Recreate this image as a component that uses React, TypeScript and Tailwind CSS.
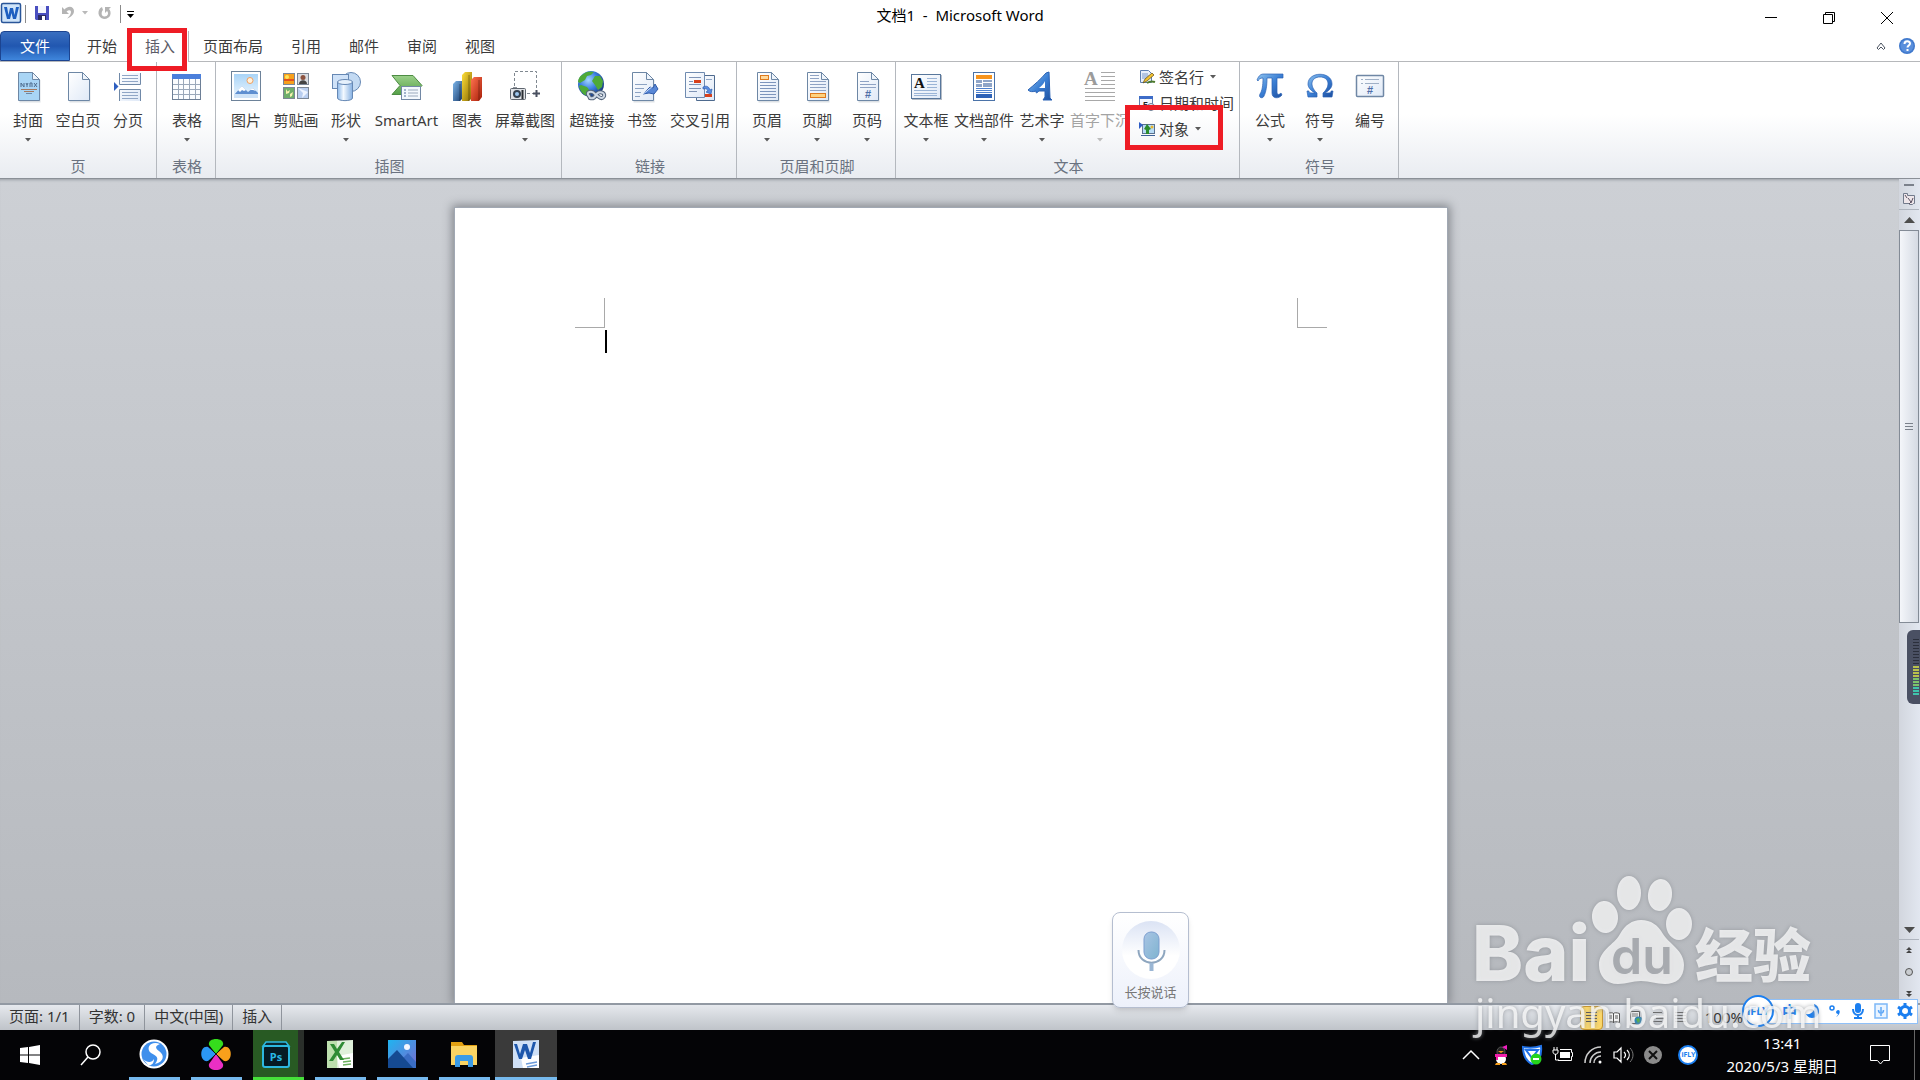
import type { ReactNode } from "react"

interface RibbonButtonProps {
    label: string
    icon: ReactNode
    width?: string
    arrow?: boolean
    disabled?: boolean
}

const tabs = ["开始", "插入", "页面布局", "引用", "邮件", "审阅", "视图"]

function Defs() {
    return (
        <svg width="0" height="0" className="absolute" aria-hidden="true">
            <defs>
                <linearGradient id="paper" x1="0" y1="0" x2="1" y2="1">
                    <stop offset="0" stopColor="#ffffff" />
                    <stop offset="1" stopColor="#dfe9f7" />
                </linearGradient>
                <linearGradient id="blue" x1="0" y1="0" x2="1" y2="1">
                    <stop offset="0" stopColor="#8fc4ef" />
                    <stop offset="0.5" stopColor="#3b7fd4" />
                    <stop offset="1" stopColor="#1d4f9f" />
                </linearGradient>
                <linearGradient id="sky" x1="0" y1="0" x2="0" y2="1">
                    <stop offset="0" stopColor="#a9d4f7" />
                    <stop offset="1" stopColor="#eef7ff" />
                </linearGradient>
                <linearGradient id="cyl" x1="0" y1="0" x2="1" y2="0">
                    <stop offset="0" stopColor="#8db9ea" />
                    <stop offset="0.4" stopColor="#f3f9ff" />
                    <stop offset="1" stopColor="#85b0e2" />
                </linearGradient>
                <linearGradient id="green" x1="0" y1="0" x2="0" y2="1">
                    <stop offset="0" stopColor="#9bd08a" />
                    <stop offset="1" stopColor="#55a048" />
                </linearGradient>
                <linearGradient id="barBlue" x1="0" y1="0" x2="1" y2="1">
                    <stop offset="0" stopColor="#7db6ea" />
                    <stop offset="1" stopColor="#1c3f70" />
                </linearGradient>
                <linearGradient id="barGold" x1="0" y1="0" x2="1" y2="1">
                    <stop offset="0" stopColor="#ffe03a" />
                    <stop offset="1" stopColor="#8a6a00" />
                </linearGradient>
                <linearGradient id="barRed" x1="0" y1="0" x2="1" y2="1">
                    <stop offset="0" stopColor="#ff7350" />
                    <stop offset="1" stopColor="#a81e08" />
                </linearGradient>
                <radialGradient id="globe" cx="0.4" cy="0.35" r="0.7">
                    <stop offset="0" stopColor="#a5d8ff" />
                    <stop offset="0.5" stopColor="#3b7ee0" />
                    <stop offset="1" stopColor="#12306f" />
                </radialGradient>
                <linearGradient id="picBg" x1="0" y1="0" x2="1" y2="1">
                    <stop offset="0" stopColor="#1fb4f0" />
                    <stop offset="1" stopColor="#7a6bd0" />
                </linearGradient>
                <linearGradient id="mic" x1="0" y1="0" x2="1" y2="1">
                    <stop offset="0" stopColor="#a9c4e4" />
                    <stop offset="1" stopColor="#7fb4d0" />
                </linearGradient>
                <linearGradient id="micDisc" x1="0" y1="0" x2="0" y2="1">
                    <stop offset="0" stopColor="#dbe3f4" />
                    <stop offset="0.6" stopColor="#ffffff" />
                </linearGradient>
            </defs>
        </svg>
    )
}

function Icon({ children, size = 32 }: { children: ReactNode; size?: number }) {
    return (
        <svg width={size} height={size} viewBox={`0 0 ${size} ${size}`} className="shrink-0 overflow-visible" aria-hidden="true">
            {children}
        </svg>
    )
}

function Sheet({ fill = "url(#paper)" }: { fill?: string }) {
    return (
        <>
            <path d="M7.5 3.5h14l7 7v22h-21z" fill="#9aa5b3" opacity="0.35" />
            <path d="M6.5 2.5h14l7 7v21h-21z" fill={fill} stroke="#6d87a5" />
            <path d="M20.5 2.5v7h7z" fill="#eef4fb" stroke="#6d87a5" strokeLinejoin="round" />
        </>
    )
}

const CoverIcon = () => (
    <Icon>
        <Sheet fill="#a9d5f5" />
        <path d="M9 17v-4l3 4v-4M14 13l1 2 1-2M15 15v2M18 17v-4h2v4M22 13l3 4M25 13l-3 4" stroke="#4d6b8c" fill="none" />
        <path d="M9 19.5h16M12 21.5h10" stroke="#a5795f" />
        <path d="M14 23.5h6" stroke="#6d87a5" />
    </Icon>
)
const BlankIcon = () => (
    <Icon>
        <Sheet />
    </Icon>
)
const BreakIcon = () => (
    <Icon>
        <path d="M7.5 3v11.5h21V3M7.5 31V19.5h21V31" fill="url(#paper)" stroke="#7089a8" />
        <path d="M10 5.5h16M10 8.5h16M10 11.5h16M10 22.5h16M10 25.5h16M10 28.5h16" stroke="#90a6c6" />
        <path d="M2 12l4.500 4.500-4.500 4.500z" fill="#2e5fc0" />
    </Icon>
)
const TableIcon = () => (
    <Icon>
        <rect x="1.500" y="4.500" width="28" height="25" fill="#fbfdff" stroke="#6d7f96" />
        <rect x="1" y="4" width="29" height="5" fill="#4b7fdb" />
        <path d="M2 14.500h27M2 19.500h27M2 24.500h27M7.500 9v20M12.500 9v20M18.500 9v20M24.500 9v20" stroke="#9aa8ba" />
    </Icon>
)
const PictureIcon = () => (
    <Icon>
        <rect x="1.500" y="1.500" width="29" height="29" fill="#fff" stroke="#6d8299" />
        <rect x="4" y="4" width="24" height="24" fill="url(#sky)" />
        <circle cx="20" cy="10.500" r="3" fill="#fff3df" stroke="#f0a060" />
        <path d="M4 25l8-9 6 6 5-4 5 5v5H4z" fill="#5f8fd0" />
        <path d="M8 20l4-4 4 4-2 1-2-1-2 2zM20 20l3-2 3 3-3-1z" fill="#fff" />
        <path d="M4 24h24v4H4z" fill="#cfe3f7" />
    </Icon>
)
const ClipIcon = () => (
    <Icon>
        <rect x="3.500" y="3.500" width="11" height="11" fill="#f7a01c" stroke="#7c8796" />
        <path d="M4 9h10v2H4z" fill="#e2521d" />
        <circle cx="7" cy="7" r="2" fill="#ffe55a" />
        <rect x="17.500" y="3.500" width="11" height="11" fill="#d9dce1" stroke="#7c8796" />
        <circle cx="23" cy="7.500" r="2.500" fill="#8c5340" />
        <path d="M19 14c0-5 8-5 8 0z" fill="#444" />
        <rect x="3.500" y="17.500" width="11" height="11" fill="#6fae6c" stroke="#7c8796" />
        <path d="M6 19l1.500 2.500L10 20l-1 3-3 1zM10 24l3-2-1 4-2 1z" fill="#f7f3b0" />
        <rect x="17.500" y="17.500" width="11" height="11" fill="#b9cef0" stroke="#7c8796" />
        <path d="M18 18l5 5-1 5 6-6z" fill="#eef4ff" />
    </Icon>
)
const ShapesIcon = () => (
    <Icon>
        <circle cx="21" cy="12" r="9.500" fill="#c3daf3" stroke="#6688b4" />
        <rect x="2.500" y="4.500" width="16" height="14" fill="#cfe2f8" stroke="#6688b4" />
        <path d="M7.500 12v16c0 3.500 15 3.500 15 0V12z" fill="url(#cyl)" stroke="#6688b4" />
        <ellipse cx="15" cy="12" rx="7.500" ry="2.500" fill="#e6f1fc" stroke="#6688b4" />
    </Icon>
)
const SmartArtIcon = () => (
    <Icon>
        <path d="M1 5.500h21l9 10-9 9H1l8-9z" fill="url(#green)" stroke="#4d8c43" />
        <rect x="10.500" y="16.500" width="19" height="13" fill="#f3f8fd" stroke="#7288a5" />
        <path d="M13 20h2M13 23h2M13 26h2" stroke="#4e6f9c" />
        <path d="M17 20h10M17 23h10M17 26h10" stroke="#9aa9bc" />
    </Icon>
)
const ChartIcon = () => (
    <Icon>
        <path d="M2 14l3-3h6v18l-2 2H2z" fill="url(#barBlue)" />
        <path d="M11 5l3-3h7v26l-3 3h-7z" fill="url(#barGold)" />
        <path d="M20 10l3-3h8v20l-3 4h-8z" fill="url(#barRed)" />
        <path d="M9 14v17M18 5v26M28 10v20" stroke="#00000055" />
    </Icon>
)
const ScreenshotIcon = () => (
    <Icon>
        <path d="M5.500 16V1.500h22v22H18" fill="none" stroke="#808890" strokeDasharray="3 2" />
        <path d="M24 23.500h7M27.500 20v7" stroke="#4a5060" strokeWidth="2" />
        <path d="M4 17h4v2H4z" fill="#8f959d" />
        <rect x="1.500" y="18.500" width="15" height="11" rx="1" fill="#dfe2e6" stroke="#5e656e" />
        <circle cx="8" cy="24" r="4" fill="#33404f" />
        <circle cx="8" cy="24" r="2" fill="#9cc6ee" />
        <path d="M13.500 20v9" stroke="#2a2e33" strokeWidth="2" />
    </Icon>
)
const LinkIcon = () => (
    <Icon>
        <circle cx="15" cy="14" r="13" fill="url(#globe)" />
        <path d="M6 5c4-4 9-4 12-3l-3 3-4 1-2 4-5 3-2-1c0-3 2-6 4-7zM19 6l5 0 3 5-1 6-4 3-3-5-3-4zM5 15l6 2 3 4-2 5c-5-1-8-5-9-10z" fill="#4eaa38" />
        <path d="M13 26c-4-4 3-6 6-2l4 3c4 3 7-2 4-4s-6 0-7 2-3 4-6 3z" fill="none" stroke="#53637a" strokeWidth="4" />
        <path d="M13 26c-4-4 3-6 6-2l4 3c4 3 7-2 4-4s-6 0-7 2-3 4-6 3z" fill="none" stroke="#cfd9e5" strokeWidth="2" />
    </Icon>
)
const BookmarkIcon = () => (
    <Icon>
        <Sheet />
        <path d="M9 14.500h12M9 18.500h9M9 22.500h6M9 26.500h5" stroke="#8ba2c3" />
        <path d="M17 24l7-7 3 1 2-4 3 5-4 5-5-1z" fill="#5887d6" stroke="#2f5bab" />
        <path d="M17 24l10-8" stroke="#dce8fa" />
    </Icon>
)
const CrossRefIcon = () => (
    <Icon>
        <path d="M12.500 5.500h18v25h-18z" fill="url(#paper)" stroke="#4e6a8e" />
        <path d="M22 9.500h6M22 24.500h6" stroke="#90a6c6" />
        <path d="M20 24h8v3h-8z" fill="#d8401a" />
        <path d="M1.500 2.500h19v25h-19z" fill="url(#paper)" stroke="#6f8bb0" />
        <path d="M5 7.500h12M5 11.500h4M5 14.500h12M5 18.500h12M5 21.500h8" stroke="#7f94b6" />
        <path d="M10 10h7v3h-7z" fill="#d8401a" />
        <path d="M19 17c4-2 6 0 7 3l2-1-1 5-5-2 2-1c-1-2-2-3-5-2z" fill="#5b8ce0" stroke="#2c5db0" strokeWidth="0.700" />
    </Icon>
)
const HeaderIcon = () => (
    <Icon>
        <Sheet />
        <rect x="9.500" y="5.500" width="8" height="4" fill="#ffd89b" stroke="#dd7a1e" />
        <path d="M9 12.500h16M9 15.500h16M9 18.500h16M9 21.500h16M9 24.500h16M9 27.500h16" stroke="#7d95bc" />
    </Icon>
)
const FooterIcon = () => (
    <Icon>
        <Sheet />
        <path d="M9 5.500h9M9 8.500h9M9 11.500h16M9 14.500h16M9 17.500h16M9 20.500h16" stroke="#8fa3c4" />
        <rect x="9.500" y="23.500" width="15" height="4" fill="#ffd27f" stroke="#dd7a1e" />
    </Icon>
)
const PageNumIcon = () => (
    <Icon>
        <Sheet />
        <path d="M9 11.500h9M9 14.500h16M9 17.500h16" stroke="#8fa3c4" />
        <text x="17" y="28" textAnchor="middle" fontSize="11" fontWeight="700" fill="#4f6fa8" fontFamily="Liberation Sans">#</text>
    </Icon>
)
const TextBoxIcon = () => (
    <Icon>
        <path d="M2 5h30v25H2z" fill="#b5bcc6" />
        <rect x="1.500" y="4.500" width="29" height="24" fill="url(#paper)" stroke="#58779c" />
        <path d="M17 8.500h10M17 11.500h10M17 14.500h10M17 17.500h10M4 20.500h23M4 23.500h23M4 25.500h23" stroke="#9ab4d6" />
        <text x="4" y="18" fontSize="15" fontWeight="700" fill="#111" fontFamily="Liberation Serif">A</text>
    </Icon>
)
const PartsIcon = () => (
    <Icon>
        <rect x="5.500" y="2.500" width="21" height="28" fill="#fff" stroke="#4b73a8" />
        <rect x="8" y="5" width="16" height="4" fill="#f7941d" />
        <path d="M8 10h6v3H8zM15 10h9v2h-9zM8 14h6v3H8zM15 13h9v4h-9z" fill="#8fa5c8" />
        <path d="M8 18.500h16M8 20.500h16M8 22.500h16" stroke="#4f82cf" />
        <rect x="8" y="24" width="16" height="4" fill="#2f63b8" />
    </Icon>
)
const WordArtIcon = () => (
    <Icon>
        <path d="M2 20C8 15 15 9 20 3l3-1 1 26 2 2h-9l2-3v-6l-6 0c-2 2-3 3-3 0-3 1-6 1-8-1z" fill="url(#blue)" stroke="#2b62b5" strokeLinejoin="round" />
        <path d="M13 18c3-2 5-5 6-7v7z" fill="#fff" />
    </Icon>
)
const DropCapIcon = () => (
    <Icon>
        <text x="0" y="15" fontSize="19" fontWeight="700" fill="#9b9b9b" fontFamily="Liberation Serif">A</text>
        <path d="M17 2.500h14M17 6.500h14M17 10.500h14M17 14.500h14M1 18.500h30M1 22.500h30M1 26.500h30M1 30.500h30" stroke="#a8a8a8" />
    </Icon>
)
const EquationIcon = () => (
    <Icon>
        <path d="M3 10c2-5 4-6 7-6h19v4h-6v14c0 3 2 3 4 1l1 2c-3 4-10 4-10-2V8h-5c0 8-1 14-3 18-1 3-6 2-4-2 2-3 3-8 3-16-3 0-4 1-5 3z" fill="url(#blue)" stroke="#2b62b5" strokeWidth="0.700" />
    </Icon>
)
const OmegaIcon = () => (
    <Icon>
        <path d="M4 27l-1-6h2c0 2 1 2 6 2-5-3-7-6-7-9C4 1 28 1 28 14c0 3-2 6-7 9 5 0 6 0 6-2h2l-1 6h-9v-4c8-7 6-16-3-16s-11 9-3 16v4z" fill="url(#blue)" stroke="#2b62b5" strokeWidth="0.700" />
    </Icon>
)
const NumberIcon = () => (
    <Icon>
        <rect x="2.500" y="5.500" width="27" height="21" rx="1" fill="url(#paper)" stroke="#6f87a5" strokeWidth="1.500" />
        <path d="M7 9.500h2M11 9.500h14M7 13.500h2M11 13.500h14" stroke="#9fb0c6" />
        <text x="16" y="24" textAnchor="middle" fontSize="11" fontWeight="700" fill="#4f6fa8" fontFamily="Liberation Sans">#</text>
    </Icon>
)

function DropArrow({ className = "" }: { className?: string }) {
    return (
        <svg width="6" height="4" viewBox="0 0 6 4" className={className} aria-hidden="true">
            <path d="M0 0h6L3 3.500z" fill="currentColor" />
        </svg>
    )
}

function RibbonButton({ label, icon, width = "w-[50px]", arrow, disabled }: RibbonButtonProps) {
    return (
        <button
            disabled={disabled}
            className={`${width} flex shrink-0 flex-col items-center pt-2 ${disabled ? "text-[#a3a3a3]" : "text-[#3b3b3b]"}`}
        >
            {icon}
            <span className="mt-2 whitespace-nowrap leading-5">{label}</span>
            {arrow && <DropArrow className={disabled ? "mt-2 text-[#bdbdbd]" : "mt-2 text-[#5a5a5a]"} />}
        </button>
    )
}

function RibbonGroup({ title, children }: { title: string; children: ReactNode }) {
    return (
        <section className="mr-0.5 flex shrink-0 flex-col border-r border-[#b4b8be] px-[3px]">
            <div className="flex h-[94px]">{children}</div>
            <h2 className="pb-0.5 text-center leading-5 text-[#6a7280]">{title}</h2>
        </section>
    )
}

function SmallButton({ label, icon, arrow, children }: { label: string; icon: ReactNode; arrow?: boolean; children?: ReactNode }) {
    return (
        <button className="relative flex h-[26px] items-center whitespace-nowrap pl-1.5 text-[#3b3b3b]">
            {icon}
            <span className="ml-1">{label}</span>
            {arrow && <DropArrow className="ml-1.5 text-[#5a5a5a]" />}
            {children}
        </button>
    )
}

function TitleBar() {
    return (
        <header className="grid h-[31px] grid-cols-[1fr_auto_1fr] bg-white">
            <div className="flex items-start pt-[3px] pl-px">
                <Icon size={20}>
                    <rect x="0.500" y="0.500" width="19" height="19" rx="1.500" fill="#cfe4f9" stroke="#2a5699" strokeWidth="1.500" />
                    <path d="M3 4h3l1.500 8L9 5h3l1.500 7L15 4h3l-3 12h-3l-1.500-6L9 16H6z" fill="#1e5fc0" />
                </Icon>
                <span className="mt-0.5 ml-1 h-[18px] w-px bg-[#8a8a8a]" />
                <button aria-label="保存" className="mt-[3px] ml-[9px]">
                    <Icon size={14}>
                        <path d="M0 0h14v14H1l-1-1z" fill="#4a4fc0" />
                        <path d="M3 0h8v7H3z" fill="#f4f6fd" />
                        <path d="M3 9h8v5H3z" fill="#2a2a62" />
                        <path d="M7 10h3v4H7z" fill="#fff" />
                    </Icon>
                </button>
                <button aria-label="撤消" className="mt-[3px] ml-3 flex items-center">
                    <Icon size={14}>
                        <path d="M1 1v7h7L5.500 5.500C9 3 11 5 9.500 8c-0.500 1.500-2 3-3.500 4.500 4-1.500 7-4 7-7.500C13 0 7-1 3.500 3.500z" fill="#b4b4b4" />
                    </Icon>
                    <DropArrow className="ml-[7px] text-[#b9b9b9]" />
                </button>
                <button aria-label="恢复" className="mt-[3px] ml-2.5">
                    <Icon size={14}>
                        <path d="M4 1C-1 3-1 12 6 13c7 0 8-7 5-10l2-2H7v6l2-2c2 2 1 5.500-2.500 5.500S3 6 5 4z" fill="#b4b4b4" />
                    </Icon>
                </button>
                <span className="mt-0.5 ml-2 h-[18px] w-px bg-[#8a8a8a]" />
                <button aria-label="自定义快速访问工具栏" className="mt-2 ml-1.5">
                    <Icon size={7}>
                        <path d="M0 0h7v1H0zM0 3h7L3.500 7z" fill="#000" />
                    </Icon>
                </button>
            </div>
            <h1 className="leading-[30px] whitespace-pre text-black">文档1&nbsp; -&nbsp; Microsoft Word</h1>
            <div className="flex justify-end pt-1 pr-1">
                <button aria-label="最小化" className="flex w-[58px] items-center justify-center">
                    <Icon size={12}>
                        <path d="M0 5.500h12" stroke="#000" />
                    </Icon>
                </button>
                <button aria-label="还原" className="flex w-[58px] items-center justify-center">
                    <Icon size={12}>
                        <path d="M0.500 2.500h9v9h-9zM2.500 2.500v-2h9v9h-2" fill="none" stroke="#000" />
                    </Icon>
                </button>
                <button aria-label="关闭" className="flex w-[58px] items-center justify-center">
                    <Icon size={12}>
                        <path d="M0 0l12 12M12 0L0 12" stroke="#000" />
                    </Icon>
                </button>
            </div>
        </header>
    )
}

function TabRow() {
    return (
        <nav className="flex h-[31px] border-b border-[#b6b8bb] bg-white">
            <button className="mr-[3px] w-[70px] rounded-t-sm border border-[#1c4490] bg-linear-to-b from-[#3a6fc0] via-[#2157b0] to-[#3f86dc] text-white">文件</button>
            {tabs.map((tab) => (
                <button key={tab} className={tab === "插入" ? "relative h-[31px] border-x border-[#b6b8bb] bg-white px-[13px] text-[#5b5b66]" : "px-3.5 text-[#3b3b3b]"}>
                    {tab}
                    {tab === "插入" && <span className="absolute -top-[3px] -left-[5px] z-10 h-[43px] w-[60px] border-[5px] border-[#ee1c25]" />}
                </button>
            ))}
            <div className="ml-auto flex items-center gap-[13px] pr-[5px]">
                <button aria-label="功能区最小化">
                    <Icon size={10}>
                        <path d="M1 7l4-5 4 5-1.500 1.500L5 6 2.500 8.500z" fill="#fff" stroke="#4b5360" />
                    </Icon>
                </button>
                <button aria-label="帮助">
                    <Icon size={16}>
                        <circle cx="8" cy="8" r="8" fill="#3f78cc" />
                        <circle cx="8" cy="8" r="6.500" fill="#5a8fdc" />
                        <path d="M5.500 6c0-3.500 5.500-3.500 5.500-0.500 0 2-2.500 2-2.500 4M8.500 11v2" stroke="#fff" strokeWidth="2" fill="none" />
                    </Icon>
                </button>
            </div>
        </nav>
    )
}

function Ribbon() {
    return (
        <div className="flex border-b border-[#8b9097] bg-linear-to-b from-white from-45% to-[#e9ecf1]">
            <RibbonGroup title="页">
                <RibbonButton label="封面" icon={<CoverIcon />} arrow />
                <RibbonButton label="空白页" icon={<BlankIcon />} />
                <RibbonButton label="分页" icon={<BreakIcon />} />
            </RibbonGroup>
            <RibbonGroup title="表格">
                <RibbonButton label="表格" icon={<TableIcon />} arrow />
            </RibbonGroup>
            <RibbonGroup title="插图">
                <RibbonButton label="图片" icon={<PictureIcon />} />
                <RibbonButton label="剪贴画" icon={<ClipIcon />} />
                <RibbonButton label="形状" icon={<ShapesIcon />} arrow />
                <RibbonButton label="SmartArt" icon={<SmartArtIcon />} width="w-[71px]" />
                <RibbonButton label="图表" icon={<ChartIcon />} />
                <RibbonButton label="屏幕截图" icon={<ScreenshotIcon />} width="w-[66px]" arrow />
            </RibbonGroup>
            <RibbonGroup title="链接">
                <RibbonButton label="超链接" icon={<LinkIcon />} />
                <RibbonButton label="书签" icon={<BookmarkIcon />} />
                <RibbonButton label="交叉引用" icon={<CrossRefIcon />} width="w-[66px]" />
            </RibbonGroup>
            <RibbonGroup title="页眉和页脚">
                <RibbonButton label="页眉" icon={<HeaderIcon />} arrow />
                <RibbonButton label="页脚" icon={<FooterIcon />} arrow />
                <RibbonButton label="页码" icon={<PageNumIcon />} arrow />
            </RibbonGroup>
            <RibbonGroup title="文本">
                <RibbonButton label="文本框" icon={<TextBoxIcon />} arrow />
                <RibbonButton label="文档部件" icon={<PartsIcon />} width="w-[66px]" arrow />
                <RibbonButton label="艺术字" icon={<WordArtIcon />} arrow />
                <RibbonButton label="首字下沉" icon={<DropCapIcon />} width="w-[66px]" arrow disabled />
                <div className="flex w-[103px] flex-col pt-0.5">
                    <SmallButton
                        label="签名行"
                        arrow
                        icon={
                            <Icon size={16}>
                                <path d="M1.500 1.500h8l3 3v9h-11z" fill="#e8effa" stroke="#5d7fb0" />
                                <path d="M3 5h6M3 7h7M3 9h5" stroke="#7a9acb" />
                                <path d="M4 14l2-4 7-6 2 2-7 6z" fill="#f2c230" stroke="#5d4a12" strokeWidth="0.700" />
                                <path d="M8 14c3-2 5-2 8-1" stroke="#4d7a2c" strokeWidth="2" fill="none" />
                            </Icon>
                        }
                    />
                    <SmallButton
                        label="日期和时间"
                        icon={
                            <Icon size={16}>
                                <rect x="0.500" y="1.500" width="13" height="12" fill="#f4f8fe" stroke="#5d7fb0" />
                                <rect x="0" y="1" width="14" height="3" fill="#3d6cc8" />
                                <text x="4" y="13" fontSize="9" fontWeight="700" fill="#222" fontFamily="Liberation Sans">5</text>
                                <circle cx="12" cy="12" r="3.500" fill="#eaf0fa" stroke="#66788f" />
                            </Icon>
                        }
                    />
                    <SmallButton
                        label="对象"
                        arrow
                        icon={
                            <Icon size={16}>
                                <rect x="3.500" y="3.500" width="12" height="9" fill="#b9dcf6" stroke="#59708d" />
                                <path d="M0 1l4 3-4 4z" fill="#2d5cc5" />
                                <circle cx="13" cy="6" r="1.500" fill="#e8b52d" />
                                <path d="M8 3l4 5-2 1v4H7V9L5 8z" fill="#2c8c2c" />
                                <path d="M2 14.500h14" stroke="#3b5f96" />
                            </Icon>
                        }
                    >
                        <span className="absolute -top-[11px] -left-2 z-10 h-[45px] w-[98px] border-[5px] border-[#ee1c25]" />
                    </SmallButton>
                </div>
            </RibbonGroup>
            <RibbonGroup title="符号">
                <RibbonButton label="公式" icon={<EquationIcon />} arrow />
                <RibbonButton label="符号" icon={<OmegaIcon />} arrow />
                <RibbonButton label="编号" icon={<NumberIcon />} />
            </RibbonGroup>
        </div>
    )
}

function ScrollColumn() {
    return (
        <div className="flex w-[21px] shrink-0 flex-col items-center bg-linear-to-r from-[#d2d6de] to-[#e2e7f0] pr-px">
            <div className="flex h-[31px] w-full flex-col items-center border-b border-[#aeb4be] pt-[5px]">
                <span className="h-0.5 w-2.5 bg-[#7b818b]" />
                <button aria-label="标尺" className="mt-1.5">
                    <Icon size={14}>
                        <path d="M1.500 1.500h4v2h7v8h-1l-1 1h-3v-1h-6z" fill="#eee6ea" stroke="#727b8c" />
                        <path d="M3 3l2 3M6 6l3 4M11 6l-2 5M7 12l3-3" stroke="#5b5262" />
                    </Icon>
                </button>
            </div>
            <button aria-label="向上滚动" className="flex h-5 items-center">
                <Icon size={11}>
                    <path d="M5.500 2L11 8H0z" fill="#4d4d4d" />
                </Icon>
            </button>
            <div className="flex w-full flex-1 flex-col">
                <div className="flex h-[57%] flex-col items-center justify-center gap-0.5 border border-[#838b96] bg-linear-to-r from-[#f4f6fa] to-[#d5dae3]">
                    <span className="h-px w-2 bg-[#7b818b]" />
                    <span className="h-px w-2 bg-[#7b818b]" />
                    <span className="h-px w-2 bg-[#7b818b]" />
                </div>
            </div>
            <button aria-label="向下滚动" className="flex h-5 items-center">
                <Icon size={11}>
                    <path d="M5.500 9L11 3H0z" fill="#4d4d4d" />
                </Icon>
            </button>
            <div className="flex h-16 w-full flex-col items-center gap-[13px] border-t border-[#aeb4be] pt-[7px]">
                <Icon size={8}>
                    <path d="M4 0l3 3H1zM4 3l3 3H1z" fill="#444" />
                </Icon>
                <Icon size={8}>
                    <circle cx="4" cy="4" r="3.500" fill="#c9ccd0" stroke="#555" />
                </Icon>
                <Icon size={8}>
                    <path d="M4 5L1 2h6zM4 8L1 5h6z" fill="#444" />
                </Icon>
            </div>
        </div>
    )
}

function LevelMeter() {
    return (
        <div className="absolute top-[451px] right-0 flex h-[74px] w-[13px] flex-col items-center rounded-l-md bg-[#4a5063] pt-[9px] pl-1">
            <svg width="6" height="58" viewBox="0 0 6 58" aria-hidden="true">
                <path d="M3 0v27" stroke="#2b2f3c" strokeWidth="6" strokeDasharray="1 2" />
                <path d="M3 27v12" stroke="#b9c24c" strokeWidth="6" strokeDasharray="2 1" />
                <path d="M3 39v9" stroke="#7cc46b" strokeWidth="6" strokeDasharray="2 1" />
                <path d="M3 48v9" stroke="#3fc4ac" strokeWidth="6" strokeDasharray="2 1" />
            </svg>
        </div>
    )
}

function Workspace() {
    return (
        <main className="relative flex min-h-0 flex-1 bg-linear-to-b from-[#cdd0d5] to-[#b6b9be]">
            <div className="flex min-w-0 flex-1 justify-center overflow-hidden pt-7 pl-[3px] shadow-[inset_0_3px_3px_-2px_#9a9ea4]">
                <article className="flex w-[994px] flex-col border border-b-0 border-[#a1a8b3] bg-white shadow-[0_0_9px_2px_#85888e]">
                    <div className="flex justify-between px-[120px] pt-[90px]">
                        <span className="size-[30px] border-r border-b border-[#a9a9a9]" />
                        <span className="size-[30px] border-b border-l border-[#a9a9a9]" />
                    </div>
                    <div className="px-[150px] pt-0.5">
                        <span className="block h-[23px] w-0.5 bg-black" />
                    </div>
                </article>
            </div>
            <ScrollColumn />
            <LevelMeter />
        </main>
    )
}

function StatusItem({ children }: { children: ReactNode }) {
    return <span className="border-r border-[#8f949c] px-[9px] leading-[23px]">{children}</span>
}

function StatusBar() {
    return (
        <footer className="flex h-[27px] border-t-2 border-[#9299a3] bg-linear-to-b from-[#e6e9ee] to-[#bfc3c9] text-[#333]">
            <StatusItem>页面: 1/1</StatusItem>
            <StatusItem>字数: 0</StatusItem>
            <StatusItem>中文(中国)</StatusItem>
            <StatusItem>插入</StatusItem>
            <div className="ml-auto flex items-center pr-[177px]">
                <button aria-label="页面视图" className="mr-1 flex h-6 w-[23px] items-center justify-center rounded-sm border border-[#c8962c] bg-[#fbd76a]">
                    <Icon size={13}>
                        <path d="M1 1.500h11M1 4.500h11M1 7.500h11M1 10.500h11" stroke="#555" />
                    </Icon>
                </button>
                <div className="mr-[18px] flex gap-[9px]">
                    <Icon size={13}>
                        <path d="M0.500 2.500c3-1 5-1 6 0 1-1 3-1 6 0v9c-3-1-5-1-6 0-1-1-3-1-6 0zM6.500 2v10M2 5h3M2 7h3M8 5h3M8 7h3" fill="#f5f5f5" stroke="#555" />
                    </Icon>
                    <Icon size={14}>
                        <path d="M1.500 0.500h9v12h-9z" fill="#f5f5f5" stroke="#555" />
                        <path d="M3 3h6M3 5h6" stroke="#777" />
                        <circle cx="9.500" cy="9.500" r="4" fill="#2f86b5" />
                        <path d="M7 8l3-1 1 3-2 2z" fill="#53b04a" />
                    </Icon>
                    <Icon size={13}>
                        <path d="M1 1.500h9M4 4.500h8M4 7.500h8M1 10.500h9" stroke="#666" />
                    </Icon>
                    <Icon size={13}>
                        <path d="M1 1.500h11M1 4.500h11M1 7.500h11M1 10.500h11" stroke="#666" />
                    </Icon>
                </div>
                <button className="leading-[23px]">100%</button>
            </div>
        </footer>
    )
}

function ImeBar() {
    return (
        <div className="absolute right-0.5 bottom-[53px] z-20 flex items-center">
            <span className="z-10 -mr-4 flex size-8 items-center justify-center rounded-full border-2 border-[#1b7ff0] bg-white text-[11px] font-bold text-[#1b7ff0]">iFLY</span>
            <div className="flex h-[25px] w-[160px] items-center justify-between border border-[#8fc0f8] bg-white pr-1 pl-[23px] text-[#1b7ff0]">
                <span className="font-bold">中</span>
                <Icon size={16}>
                    <path d="M9 1c7 2 7 14-2 14-3 0-5-2-6-4 6 1 10-4 8-10z" fill="currentColor" />
                </Icon>
                <Icon size={14}>
                    <circle cx="4" cy="4" r="2" fill="none" stroke="currentColor" strokeWidth="1.500" />
                    <path d="M8 13c4-2 5-7 2-7-3 1-2 4 0 4 0 1-1 2-2 3z" fill="currentColor" />
                </Icon>
                <Icon size={16}>
                    <rect x="5" y="0" width="6" height="10" rx="3" fill="currentColor" />
                    <path d="M3 6c0 8 10 8 10 0M8 12v3M4 15h8" fill="none" stroke="currentColor" strokeWidth="2" />
                </Icon>
                <Icon size={16}>
                    <rect x="2" y="1" width="12" height="14" fill="#eaf4ff" stroke="#7db8f8" strokeWidth="1.500" />
                    <path d="M8 4v5M5.500 7c0 4 5 4 5 0M8 10v3" stroke="#5da6f6" fill="none" strokeWidth="1.500" />
                </Icon>
                <Icon size={16}>
                    <circle cx="8" cy="8" r="4.500" fill="none" stroke="currentColor" strokeWidth="3" />
                    <path d="M8 0v3M8 13v3M1 4l3 2M12 10l3 2M1 12l3-2M12 6l3-2" stroke="currentColor" strokeWidth="3" />
                </Icon>
            </div>
        </div>
    )
}

function VoicePanel() {
    return (
        <button className="absolute bottom-[72px] left-[1112px] z-20 flex h-24 w-[77px] flex-col items-center rounded-lg border border-[#b5bed0] bg-linear-to-b from-white to-[#edf1fb] pt-[7px] text-[#777] shadow-md">
            <Icon size={60}>
                <circle cx="30" cy="30" r="29" fill="url(#micDisc)" />
                <rect x="23" y="12" width="15" height="27" rx="7" fill="url(#mic)" stroke="#7d9fd0" />
                <path d="M17.500 30c0 17 26 17 26 0" fill="none" stroke="#8ea6bf" strokeWidth="2" />
                <path d="M30.500 43v8" stroke="#9ab6d4" strokeWidth="4" />
            </Icon>
            <span className="mt-0.5 text-[13px] leading-5">长按说话</span>
        </button>
    )
}

function Watermark() {
    return (
        <div className="pointer-events-none absolute right-[103px] bottom-[43px] z-30 w-[342px] text-white/75 [filter:drop-shadow(0_0_2px_#8b8f94)]">
            <svg width="342" height="122" viewBox="0 0 342 122" className="overflow-visible" aria-hidden="true" fill="currentColor">
                <text x="-3" y="110" fontSize="77" fontWeight="800" fontFamily="Inter">Bai</text>
                <ellipse cx="130" cy="46" rx="13" ry="16" transform="rotate(-5 130 46)" />
                <ellipse cx="154" cy="22" rx="12" ry="17" />
                <ellipse cx="185" cy="24" rx="12" ry="16" transform="rotate(8 185 24)" />
                <ellipse cx="204" cy="53" rx="13" ry="16" />
                <path
                    fillRule="evenodd"
                    d="M166 49c10 0 17 5 22 14 6 10 21 16 21 31 0 13-8 19-19 19-9 0-15-3-24-3s-14 3-23 3c-12 0-19-8-19-19 0-15 15-20 21-31 5-9 12-14 21-14z"
                />
                <text x="136" y="103" fontSize="50" fontWeight="600" fontFamily="Inter" fill="#a7aaaf">du</text>
                <text x="220" y="106" fontSize="58" fontWeight="900" fontFamily="Noto Sans CJK SC">经验</text>
            </svg>
            <div className="-mt-1 text-[40px] leading-[48px] whitespace-nowrap">jingyan.baidu.com</div>
        </div>
    )
}

const apps = [
    {
        name: "搜狗浏览器",
        icon: (
            <>
                <circle cx="15" cy="15" r="14.500" fill="#fff" />
                <circle cx="15" cy="15" r="12.500" fill="#3f8fec" />
                <path d="M21 5C12 1 6 9 12 14c5 3 9 4 4 11 9-2 10-9 4-13-4-3-4-5 1-7z" fill="#fff" />
                <path d="M4 20c4 4 9 4 11 0 0 5-3 7-6 6z" fill="#fff" />
            </>
        ),
    },
    {
        name: "四叶草",
        icon: (
            <>
                <path d="M15 15L8 6C6-2 24-2 22 6z" fill="#35dc1c" />
                <path d="M15 15l8-7c9-2 9 16 0 14z" fill="#f9a01b" />
                <path d="M15 15l7 10c2 8-16 8-14 0z" fill="#ea2fc4" />
                <path d="M15 15L7 8c-9-2-9 16 0 14z" fill="#2b97f5" />
                <path d="M9 9l12 12M21 9L9 21" stroke="#111" />
            </>
        ),
    },
    {
        name: "Photoshop",
        cell: "bg-[#285a23] border-r-[6px] border-[#2a2f2a]",
        icon: (
            <>
                <path d="M6 3h20l3 4H3z" fill="#0b2a33" stroke="#2cb8e0" strokeWidth="1.500" />
                <rect x="3" y="7" width="26" height="21" rx="2" fill="#061b24" stroke="#2cb8e0" strokeWidth="2" />
                <text x="16" y="22" textAnchor="middle" fontSize="11" fontWeight="700" fill="#29b9e6" fontFamily="Open Sans">Ps</text>
            </>
        ),
    },
    {
        name: "Excel",
        icon: (
            <>
                <path d="M2 2l26-1v28H2z" fill="#dff0da" />
                <path d="M2 2l10 0 0 27H2z" fill="#bddfae" />
                <path d="M12 17l16-3v15l-14 0z" fill="#fff" />
                <path d="M17 20l8-1M18 23l8-1M18 26l8-1" stroke="#6bb05e" strokeWidth="1.500" />
                <path d="M5 5h4l3 5 5-7h3l-6 10 5 8h-4l-3-5-4 6H4l6-9z" fill="#2f8b35" />
            </>
        ),
    },
    {
        name: "照片",
        icon: (
            <>
                <rect x="1" y="1" width="28" height="28" fill="url(#picBg)" />
                <circle cx="20" cy="8" r="3" fill="#f3f6ff" />
                <path d="M15 20l6-6 8 9v6H15z" fill="#3a6dc4" />
                <path d="M1 20l9-9 16 18H1z" fill="#154a92" />
            </>
        ),
    },
    {
        name: "文件资源管理器",
        icon: (
            <>
                <path d="M2 3h11l2 3h13v8H2z" fill="#e2a012" />
                <path d="M2 7h26v19H2z" fill="#fbd463" />
                <path d="M6 28V19c0-2 1-3 3-3h12c2 0 3 1 3 3v9h-5v-6h-8v6z" fill="#3b9be6" />
            </>
        ),
    },
    {
        name: "Word",
        cell: "bg-[#3a3a3a]",
        icon: (
            <>
                <path d="M2 2l26-1v28H2z" fill="#cfe0f6" />
                <path d="M10 19l18-3v13l-16 0z" fill="#fff" />
                <path d="M15 25l11-2M16 28l10-2" stroke="#6c9ad8" strokeWidth="1.500" />
                <path d="M3 5h3l3 10 3-10h4l3 9 3-11h3l-5 17h-3l-3-9-3 9H8z" fill="#1d57ac" />
            </>
        ),
    },
]

function Taskbar() {
    return (
        <nav className="flex h-[50px] bg-[#040406] text-white">
            <button aria-label="开始" className="flex w-[60px] items-center justify-center">
                <Icon size={22}>
                    <path d="M1 4l8-1v7.500H1zM10 3l11-2v9.500H10zM1 11.500h8V19l-8-1zM10 11.500h11V21l-11-2z" fill="#fff" />
                </Icon>
            </button>
            <button aria-label="搜索" className="mr-0.5 flex w-[61px] items-center justify-center">
                <Icon size={22}>
                    <circle cx="13" cy="8" r="7" fill="none" stroke="#fff" strokeWidth="1.500" />
                    <path d="M8 13l-7 8" stroke="#fff" strokeWidth="1.500" />
                </Icon>
            </button>
            {apps.map((app) => (
                <button key={app.name} aria-label={app.name} className="flex w-[62px] flex-col items-center">
                    <span className={`flex h-[47px] items-center justify-center ${app.name === "Word" ? "w-full" : "w-[51px]"} ${app.cell ?? ""}`}>
                        <Icon size={30}>{app.icon}</Icon>
                    </span>
                    <span className={`h-[3px] ${app.name === "Photoshop" ? "w-[51px] bg-[#46e03a]" : app.name === "Word" ? "w-full bg-[#76b9ed]" : "w-[51px] bg-[#76b9ed]"}`} />
                </button>
            ))}
            <div className="ml-auto flex items-center">
                <div className="flex items-center gap-[11px] pr-4">
                    <Icon size={18}>
                        <path d="M1 13l8-8 8 8" fill="none" stroke="#fff" strokeWidth="1.500" />
                    </Icon>
                    <Icon size={20}>
                        <ellipse cx="10" cy="7" rx="4" ry="5" fill="#222" stroke="#555" />
                        <path d="M11 2l5-2v5z" fill="#f01fc0" />
                        <ellipse cx="10" cy="14" rx="5" ry="5" fill="#fff" />
                        <path d="M4 9h12v3H7v3H5v-3H4z" fill="#f01fa8" />
                        <path d="M7 6h6l-3 2zM5 18h4v2H4zM11 18h4l1 2h-5z" fill="#f7a01c" />
                    </Icon>
                    <Icon size={20}>
                        <path d="M1 2c6 1 12 1 18-1 1 10-3 16-9 18C4 16 1 10 1 2z" fill="#fff" stroke="#2172e8" strokeWidth="2" />
                        <path d="M4 5h12l-6 8z" fill="#fff" stroke="#2172e8" strokeWidth="2" />
                        <circle cx="14" cy="14" r="5.500" fill="#25d41c" />
                        <path d="M11 14h6" stroke="#fff" strokeWidth="2" />
                    </Icon>
                    <Icon size={20}>
                        <rect x="7" y="7" width="10" height="6" fill="#fff" />
                        <path d="M7 4.500h11.500v3h1v4h-1v4H5M1 2v3M4 2v3M0 5h5v2c0 3-5 3-5 0zM2.500 9v6H6" fill="none" stroke="#fff" />
                    </Icon>
                    <Icon size={18}>
                        <path d="M1 17C1 8 8 1 17 1M6 17c0-6 5-11 11-11M10 17c0-4 3-7 7-7" fill="none" stroke="#ccc" strokeWidth="1.500" />
                        <circle cx="16" cy="16" r="1.500" fill="#fff" />
                    </Icon>
                    <Icon size={20}>
                        <path d="M1 7h3l4-4v14l-4-4H1zM11 7c2 2 2 4 0 6M14 5c3 3 3 7 0 10" fill="none" stroke="#fff" strokeWidth="1.200" />
                        <path d="M17 3c4 4 4 10 0 14" fill="none" stroke="#777" />
                    </Icon>
                    <Icon size={18}>
                        <circle cx="9" cy="9" r="9" fill="#8b8b8b" />
                        <path d="M5 5l8 8M13 5l-8 8" stroke="#111" strokeWidth="2" />
                    </Icon>
                </div>
                <span className="mr-7 flex size-5 items-center justify-center rounded-full border-2 border-[#1b7ff0] bg-white text-[7px] font-bold text-[#1b7ff0]">iFLY</span>
                <div className="mr-8 text-center leading-[23px]">
                    <div>13:41</div>
                    <div>2020/5/3 星期日</div>
                </div>
                <button aria-label="通知" className="mr-6">
                    <Icon size={20}>
                        <path d="M0.500 0.500h19v15h-6l-3 3.500-3-3.500h-7z" fill="none" stroke="#fff" />
                    </Icon>
                </button>
                <span className="mr-[5px] h-[50px] w-px bg-[#666]" />
            </div>
        </nav>
    )
}

export default function App() {
    return (
        <div className="relative flex h-screen flex-col overflow-hidden font-['Noto_Sans','Noto_Sans_CJK_SC',sans-serif] text-[15px]">
            <Defs />
            <TitleBar />
            <TabRow />
            <Ribbon />
            <Workspace />
            <StatusBar />
            <Taskbar />
            <VoicePanel />
            <ImeBar />
            <Watermark />
        </div>
    )
}
